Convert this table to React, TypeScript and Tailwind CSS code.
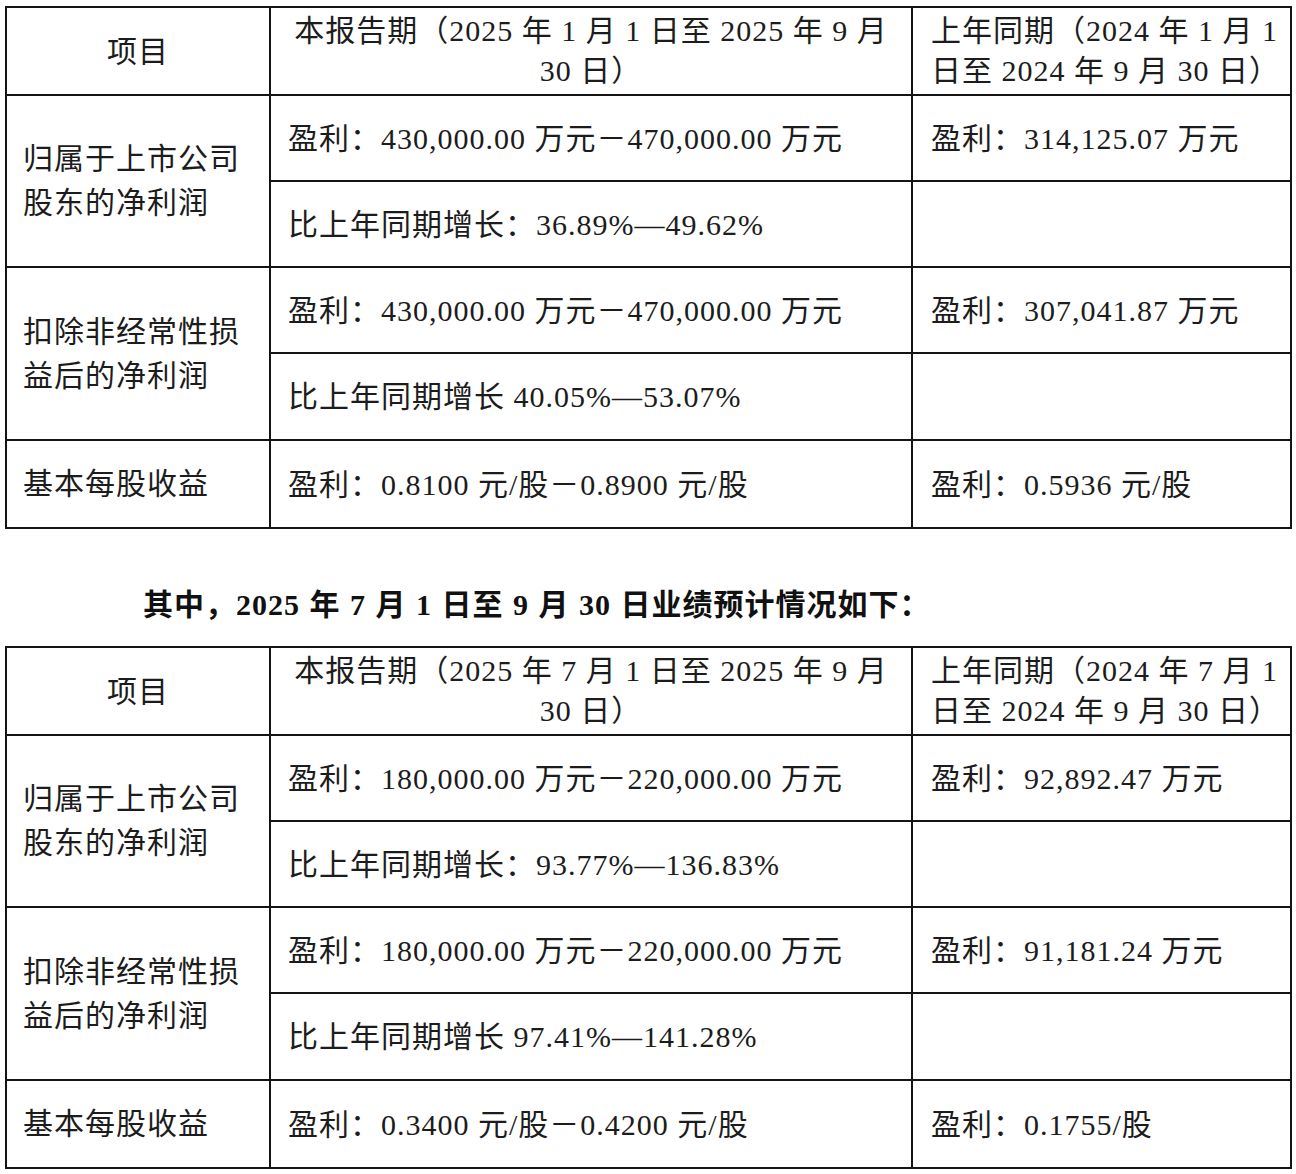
type Group = {
  label: string[];
  rows: [string, string][];
};

type TableData = {
  current: string[];
  previous: string[];
  groups: Group[];
};

const first: TableData = {
  current: ["本报告期（2025 年 1 月 1 日至 2025 年 9 月", "30 日）"],
  previous: ["上年同期（2024 年 1 月 1", "日至 2024 年 9 月 30 日）"],
  groups: [
    {
      label: ["归属于上市公司", "股东的净利润"],
      rows: [
        ["盈利：430,000.00 万元－470,000.00 万元", "盈利：314,125.07 万元"],
        ["比上年同期增长：36.89%—49.62%", ""],
      ],
    },
    {
      label: ["扣除非经常性损", "益后的净利润"],
      rows: [
        ["盈利：430,000.00 万元－470,000.00 万元", "盈利：307,041.87 万元"],
        ["比上年同期增长 40.05%—53.07%", ""],
      ],
    },
    {
      label: ["基本每股收益"],
      rows: [["盈利：0.8100 元/股－0.8900 元/股", "盈利：0.5936 元/股"]],
    },
  ],
};

const second: TableData = {
  current: ["本报告期（2025 年 7 月 1 日至 2025 年 9 月", "30 日）"],
  previous: ["上年同期（2024 年 7 月 1", "日至 2024 年 9 月 30 日）"],
  groups: [
    {
      label: ["归属于上市公司", "股东的净利润"],
      rows: [
        ["盈利：180,000.00 万元－220,000.00 万元", "盈利：92,892.47 万元"],
        ["比上年同期增长：93.77%—136.83%", ""],
      ],
    },
    {
      label: ["扣除非经常性损", "益后的净利润"],
      rows: [
        ["盈利：180,000.00 万元－220,000.00 万元", "盈利：91,181.24 万元"],
        ["比上年同期增长 97.41%—141.28%", ""],
      ],
    },
    {
      label: ["基本每股收益"],
      rows: [["盈利：0.3400 元/股－0.4200 元/股", "盈利：0.1755/股"]],
    },
  ],
};

function Cell({ children, className = "" }: { children?: React.ReactNode; className?: string }) {
  return <div className={`flex items-center bg-white whitespace-nowrap ${className}`}>{children}</div>;
}

function ForecastTable({ data }: { data: TableData }) {
  return (
    <div className="ml-[5px] grid w-[1287px] grid-cols-[262px_640px_377px] grid-rows-[86px_84px_84px_84px_85px_86px] gap-[2px] bg-[#141414] p-[2px]">
      {/* header */}
      <Cell className="justify-center">项目</Cell>
      <Cell className="flex-col justify-center text-center leading-[40px]">
        {data.current.map((line) => (
          <span key={line}>{line}</span>
        ))}
      </Cell>
      <Cell className="flex-col !items-start justify-center pl-[18px] leading-[40px]">
        {data.previous.map((line) => (
          <span key={line}>{line}</span>
        ))}
      </Cell>

      {data.groups.map((group) =>
        group.rows.map(([now, before], idx) => (
          <div key={group.label[0] + idx} className="contents">
            {idx === 0 && (
              <Cell
                className={`flex-col !items-start justify-center pl-[16px] leading-[44px] ${
                  group.rows.length > 1 ? "row-span-2" : ""
                }`}
              >
                {group.label.map((line) => (
                  <span key={line}>{line}</span>
                ))}
              </Cell>
            )}
            <Cell className="pl-[17px]">{now}</Cell>
            <Cell className="pl-[18px]">{before}</Cell>
          </div>
        ))
      )}
    </div>
  );
}

export default function App() {
  return (
    <div
      className="min-h-[1174px] bg-white pt-[6px] text-[30px] tracking-[1px] text-[#1c1c1c]"
      style={{ fontFamily: '"Liberation Serif", "Noto Sans CJK SC", serif' }}
    >
      <ForecastTable data={first} />
      <h2 className="mt-[56px] mb-[21px] pl-[143px] text-[30px] leading-[40px] font-bold text-[#111] [word-spacing:1px]">
        其中，2025 年 7 月 1 日至 9 月 30 日业绩预计情况如下：
      </h2>
      <ForecastTable data={second} />
    </div>
  );
}
